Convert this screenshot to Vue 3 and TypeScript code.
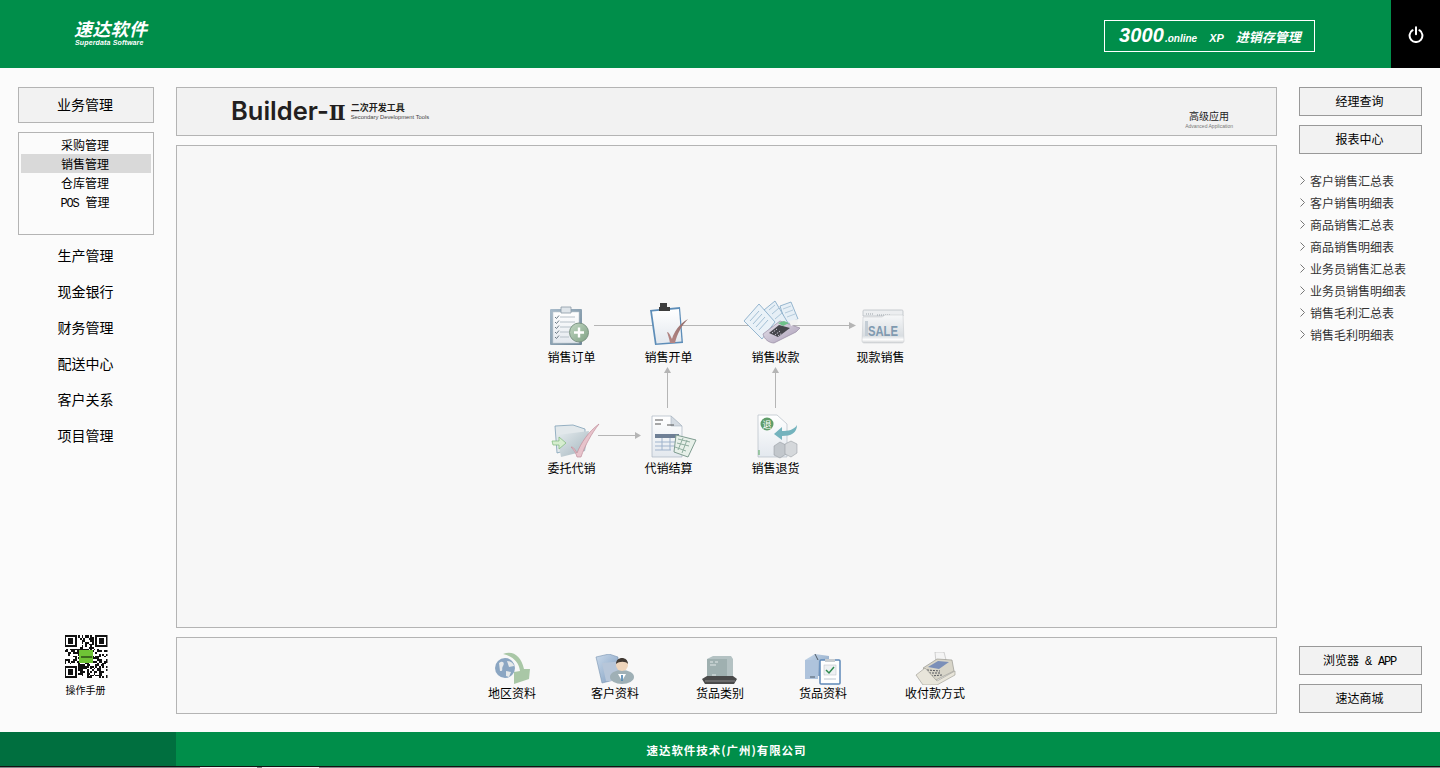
<template>
  <div class="page">
    <svg class="defs" width="0" height="0">
      <defs>
        <linearGradient id="gBoard" x1="0" y1="0" x2="1" y2="1"><stop offset="0" stop-color="#a9bccb" /><stop offset="1" stop-color="#6f8798" /></linearGradient>
        <linearGradient id="gPaper" x1="0" y1="0" x2="0" y2="1"><stop offset="0" stop-color="#ffffff" /><stop offset="1" stop-color="#e3e8ee" /></linearGradient>
        <linearGradient id="gFolder" x1="0" y1="0" x2="1" y2="1"><stop offset="0" stop-color="#e6ecef" /><stop offset="1" stop-color="#a3b5bd" /></linearGradient>
        <linearGradient id="gBlue" x1="0" y1="0" x2="1" y2="1"><stop offset="0" stop-color="#c9d9ea" /><stop offset="1" stop-color="#7f9dc0" /></linearGradient>
        <linearGradient id="gCheck" x1="0" y1="1" x2="1" y2="0"><stop offset="0" stop-color="#b98a88" /><stop offset="1" stop-color="#8f6a68" /></linearGradient>
        <linearGradient id="gGreen" x1="0" y1="0" x2="1" y2="1"><stop offset="0" stop-color="#c3d8c4" /><stop offset="1" stop-color="#7fa184" /></linearGradient>
        <linearGradient id="gSale" x1="0" y1="0" x2="0" y2="1"><stop offset="0" stop-color="#f7f8f9" /><stop offset=".75" stop-color="#d8dde1" /><stop offset=".88" stop-color="#fdfdfd" /><stop offset="1" stop-color="#cfd2d4" /></linearGradient>
        <linearGradient id="gPos" x1="0" y1="0" x2="1" y2="1"><stop offset="0" stop-color="#e9e6ee" /><stop offset="1" stop-color="#a89bb5" /></linearGradient>
      </defs>
    </svg>

    <header class="top">
      <div class="logo">
        <div class="logo-cn">速达软件</div>
        <div class="logo-en">Superdata Software</div>
      </div>
      <div class="product">
        <span class="p-num">3000</span><span class="p-online">.online</span>
        <span class="p-xp">XP</span>
        <span class="p-name">进销存管理</span>
      </div>
      <div class="power">
        <svg width="16" height="17" viewBox="0 0 16 17" fill="none" stroke="#fff" stroke-width="2" stroke-linecap="round">
          <path d="M4.6 4.2a6.4 6.4 0 1 0 6.8 0" />
          <path d="M8 1.2v7" />
        </svg>
      </div>
    </header>

    <div class="body">
      <aside class="left">
        <button class="tab-btn">业务管理</button>
        <ul class="sub-menu">
          <li v-for="item in subMenu" :key="item.label" :class="{ active: item.active }">
            <span v-if="item.latin" class="latin pos">{{ item.latin }}</span>{{ item.label }}
          </li>
        </ul>
        <ul class="main-menu">
          <li v-for="m in mainMenu" :key="m">{{ m }}</li>
        </ul>
        <div class="manual">
          <svg width="43" height="43" viewBox="0 0 25 25" shape-rendering="crispEdges">
            <rect width="25" height="25" fill="#fff" />
            <rect v-for="(c, i) in qrCells" :key="i" :x="c[0]" :y="c[1]" width="1" height="1" fill="#111" />
            <g v-for="f in qrFinders" :key="f[0] + '-' + f[1]">
              <rect :x="f[0]" :y="f[1]" width="7" height="7" fill="#111" />
              <rect :x="f[0] + 1" :y="f[1] + 1" width="5" height="5" fill="#fff" />
              <rect :x="f[0] + 2" :y="f[1] + 2" width="3" height="3" fill="#111" />
            </g>
            <rect x="8.700" y="8.700" width="8" height="7.600" fill="#6fc436" />
            <rect x="9.500" y="12" width="6.400" height="1.200" fill="#3c6a1e" />
          </svg>
          <span>操作手册</span>
        </div>
      </aside>

      <main class="center">
        <section class="banner">
          <div class="brand">
            <span class="brand-name">Builder-<span class="brand-two">Ⅱ</span></span>
            <div class="brand-sub">
              <span class="brand-cn">二次开发工具</span>
              <span class="brand-en">Secondary Development Tools</span>
            </div>
          </div>
          <div class="advanced">
            <span class="adv-cn">高级应用</span>
            <span class="adv-en">Advanced Application</span>
          </div>
        </section>

        <section class="canvas">
          <svg class="flow" width="1099" height="481" fill="none" stroke="#b5b5b5">
            <path d="M417 179.500H672" />
            <path d="M672 176l7 3.500-7 3.500z" fill="#b5b5b5" stroke="none" />
            <path d="M421 289.500H458" />
            <path d="M458 286l6 3.500-6 3.500z" fill="#b5b5b5" stroke="none" />
            <path d="M490.500 262V226" />
            <path d="M487 227l3.500-6 3.500 6z" fill="#b5b5b5" stroke="none" />
            <path d="M598.500 262V226" />
            <path d="M595 227l3.500-6 3.500 6z" fill="#b5b5b5" stroke="none" />
          </svg>

          <div
            v-for="n in flowNodes"
            :key="n.label"
            class="node"
            :style="{ left: n.x + 'px', top: n.y + 'px' }"
          >
            <svg class="node-icon" :width="n.w" :height="n.h" :viewBox="`0 0 ${n.w} ${n.h}`" :style="{ marginLeft: n.dx + 'px' }">
              <!-- 销售订单 -->
              <g v-if="n.icon === 'order'">
                <rect x="1" y="3" width="32" height="36" rx="1" fill="url(#gBoard)" />
                <rect x="4" y="6" width="26" height="31" fill="url(#gPaper)" stroke="#c3ccd3" stroke-width=".6" />
                <path d="M12 1h10v6H12z" fill="#dfe5ea" stroke="#8c9aa6" stroke-width=".8" />
                <path d="M11 11h15M11 16h15M11 21h12M11 26h9M11 31h9" stroke="#b6c0c8" />
                <path d="M6 11l1.500 1.500L10 9.500M6 16l1.500 1.500L10 14.500M6 21l1.500 1.500L10 19.500M6 26l1.500 1.500L10 24.500M6 31l1.500 1.500L10 29.500" stroke="#6b7a85" fill="none" />
                <circle cx="30" cy="26.500" r="9.500" fill="url(#gGreen)" stroke="#7d9585" />
                <path d="M30 21.500v10M25 26.500h10" stroke="#fff" stroke-width="2.400" />
              </g>
              <!-- 销售开单 -->
              <g v-else-if="n.icon === 'bill'">
                <path d="M2 9L32 6l3 36-28 2z" fill="#5d8db8" />
                <path d="M4 10.500L31 8l2.500 32.500-25 2z" fill="url(#gPaper)" />
                <path d="M12 2h7v4h3v4H11V6h1z" fill="#3d3d3d" />
                <path d="M19 31c2 0 3 3 5 7 2-7 7-15 16-20-6 6-11 15-13 24h-5c-1-5-2-8-3-11z" fill="url(#gCheck)" />
              </g>
              <!-- 销售收款 -->
              <g v-else-if="n.icon === 'pay'">
                <path d="M36 5L47 1l7 17-12 6z" fill="#e6eff6" stroke="#7fa6c4" stroke-width=".8" />
                <path d="M39 8l8-3M41 12l8-3M43 16l8-3" stroke="#b5cbdc" />
                <path d="M20 9L31 0l13 22-13 10z" fill="#e6eff6" stroke="#7fa6c4" stroke-width=".8" />
                <path d="M25 9l6-5M28 13l7-6M31 18l7-6" stroke="#a9c4d8" />
                <path d="M0 20L15 3l16 18-13 17z" fill="#eaf2f8" stroke="#7fa6c4" stroke-width=".8" />
                <path d="M6 20l9-10M9 23l9-10M12 26l9-10M15 29l9-10" stroke="#a3bfd4" />
                <path d="M19 33L36 20l20 7-4 4-22 11c-5 0-10-4-11-9z" fill="url(#gPos)" stroke="#8b7e99" stroke-width=".6" />
                <path d="M25 32l10-8 11 3-12 9z" fill="#45454b" />
                <path d="M34 22l6-2 5 2-6 3z" fill="#6fc08a" />
                <path d="M28 32l5-4M31 34l5-4M34 35l4-3" stroke="#c8c4d0" stroke-dasharray="1.500 1" />
                <path d="M45 20l9-2-1 5-6 2z" fill="#f2f2f2" />
              </g>
              <!-- 现款销售 -->
              <g v-else-if="n.icon === 'sale'">
                <path d="M2 2C2 1 3 1 4 1h36c1 0 2 0 2 1v5H2z" fill="#eceef0" stroke="#a9afb5" stroke-width=".6" />
                <path d="M5 5h8M16 6h14" stroke="#9aa2a9" stroke-dasharray="1 1" />
                <path d="M2 8h19l3-2h18l1 26c0 1-1 2-2 2H3c-1 0-2-1-2-2z" fill="url(#gSale)" stroke="#c0c5c9" stroke-width=".5" />
                <rect x="4" y="12" width="3" height="15" fill="#c5ced6" />
                <text x="7" y="26.500" class="sale-text" textLength="30" lengthAdjust="spacingAndGlyphs">SALE</text>
              </g>
              <!-- 委托代销 -->
              <g v-else-if="n.icon === 'consign'">
                <path d="M4 3L22 2l12 4 0 16-28 8z" fill="#e2e8eb" stroke="#7fa0b6" stroke-width=".8" />
                <path d="M6 12L38 8l-4 20-24 6z" fill="url(#gFolder)" />
                <path d="M1 18h7v-4l7 6-7 6v-4H2z" fill="#d6edcf" stroke="#7cb979" stroke-width=".7" />
                <path d="M20 24c3 0 4 3 6 6C30 20 37 9 48 1 41 10 34 22 30 34h-4c-1-4-3-7-6-10z" fill="#e7c3cb" stroke="#c18e9b" stroke-width=".7" />
              </g>
              <!-- 代销结算 -->
              <g v-else-if="n.icon === 'settle'">
                <path d="M1 1h19l11 10v31H1z" fill="url(#gPaper)" stroke="#aab6c2" stroke-width=".7" />
                <path d="M20 1v10h11z" fill="#d4dbe2" stroke="#aab6c2" stroke-width=".6" />
                <path d="M4 5h8M4 9h6M16 10h7" stroke="#555" />
                <rect x="4" y="19" width="24" height="4" fill="#6e7f95" />
                <path d="M4 27h24M4 31h24M4 35h16M11 23v12M19 23v12" stroke="#9fb3cc" />
                <path d="M25 20l20 5-8 17-14-5z" fill="#e7f0e9" stroke="#7f9c90" />
                <path d="M27 24l12 3M26 28l12 3M24 32l11 4M32 23l-5 12M36 25l-5 13" stroke="#8fae9f" />
              </g>
              <!-- 销售退货 -->
              <g v-else-if="n.icon === 'back'">
                <path d="M1 1h19l10 9v33H1z" fill="url(#gPaper)" stroke="#b4bdc6" stroke-width=".7" />
                <circle cx="10" cy="10" r="6.500" fill="#5f9d69" />
                <text x="10" y="13.500" class="back-text">退</text>
                <path d="M40 11c0 8-6 11-15 11v4l-8-6 8-7v4c6 0 12-1 15-6z" fill="#74b3bd" />
                <path d="M17 32l6-4 6 3v9l-6 4-6-3z" fill="#c2c7cc" stroke="#8d9398" stroke-width=".5" />
                <path d="M28 30l6-3 6 3v9l-6 4-6-3z" fill="#d5d8db" stroke="#8d9398" stroke-width=".5" />
                <path d="M2 36v5" stroke="#56a85e" />
              </g>
            </svg>
            <span class="node-label">{{ n.label }}</span>
          </div>
        </section>

        <section class="shortcuts">
          <div v-for="s in shortcuts" :key="s.label" class="shortcut">
            <svg :width="s.w" :height="s.h" :viewBox="`0 0 ${s.w} ${s.h}`">
              <!-- 地区资料 -->
              <g v-if="s.icon === 'globe'">
                <path d="M9 3c10-4 18 2 21 15l6 0-1 10-15 5 0-12 6-1C25 11 18 5 9 3z" fill="#a9c7a6" />
                <circle cx="11" cy="17" r="10" fill="#8ba6c2" />
                <path d="M5 12c4-3 6 0 4 3s1 5-3 5zM13 10c4 0 7 3 7 5l-5 1zM12 20l5 1-2 5-3-1z" fill="#e6e9ea" />
              </g>
              <!-- 客户资料 -->
              <g v-else-if="s.icon === 'client'">
                <path d="M1 3l13-3 9 3v22l-16 4z" fill="url(#gBlue)" stroke="#7993b0" stroke-width=".6" />
                <path d="M7 9l24-2-4 20H11z" fill="#b7c6d9" />
                <ellipse cx="27" cy="23" rx="12" ry="7" fill="#9fb0b6" />
                <path d="M23 20h8l-4 7z" fill="#fff" />
                <path d="M27 21v6" stroke="#3c78a8" stroke-width="1.500" />
                <circle cx="27" cy="11" r="6" fill="#efd5bb" />
                <path d="M21 10c0-8 12-8 12 0-2-3-9-3-12 0z" fill="#423a33" />
              </g>
              <!-- 货品类别 -->
              <g v-else-if="s.icon === 'pallet'">
                <path d="M5 5l6-3h18l2 3v20H5z" fill="#b4c2c3" />
                <path d="M5 5h20v20H5z" fill="#9fb0b0" />
                <path d="M8 8h3M13 8h3M8 11h6M10 21h4" stroke="#e2e8e8" />
                <path d="M0 25l5-3h26l4 3-3 5H3z" fill="#4a4a4a" />
                <path d="M3 27h30" stroke="#8a8a8a" />
              </g>
              <!-- 货品资料 -->
              <g v-else-if="s.icon === 'goods'">
                <path d="M1 7l10-6 14 2v20H1z" fill="url(#gBlue)" />
                <path d="M1 7h13v19H1z" fill="#aec3dc" />
                <path d="M11 1l3 6M6 24h5" stroke="#4f5b66" />
                <rect x="16" y="7" width="20" height="24" rx="1" fill="#fff" stroke="#5d88b8" stroke-width="1.500" />
                <path d="M21 6h10v3H21z" fill="#c7ccd0" />
                <rect x="20" y="12" width="12" height="10" fill="#eef1f3" stroke="#b6bdc4" stroke-width=".5" />
                <path d="M22 17l3 3 5-6" stroke="#2f8a50" stroke-width="1.500" fill="none" />
                <path d="M20 26h12" stroke="#bcc6d0" />
              </g>
              <!-- 收付款方式 -->
              <g v-else-if="s.icon === 'cash'">
                <path d="M20 0h9l2 8-10 3z" fill="#f4f4f4" stroke="#a8a8a8" stroke-width=".5" />
                <path d="M8 16l14-9 15 1 2 11-18 9z" fill="#d8d5c9" stroke="#8c8c84" stroke-width=".6" />
                <path d="M13 15l10-6 11 1-10 7z" fill="#7b8fb8" />
                <path d="M12 18l13 1M14 21l12 0M16 24l11-1" stroke="#55575c" stroke-dasharray="2 1" />
                <path d="M1 23l9-7 12 13 18-10v4L22 33H8z" fill="#e8e5da" stroke="#98978e" stroke-width=".6" />
              </g>
            </svg>
            <span>{{ s.label }}</span>
          </div>
        </section>
      </main>

      <aside class="right">
        <button class="side-btn">经理查询</button>
        <button class="side-btn">报表中心</button>
        <ul class="reports">
          <li v-for="r in reports" :key="r">
            <svg width="5" height="9" viewBox="0 0 5 9" fill="none" stroke="#777"><path d="M.5.5l4 4-4 4" /></svg>
            <span>{{ r }}</span>
          </li>
        </ul>
        <div class="right-bottom">
          <button class="side-btn">浏览器<span class="latin app">&amp; APP</span></button>
          <button class="side-btn">速达商城</button>
        </div>
      </aside>
    </div>

    <footer class="foot">
      <div class="foot-left"></div>
      <div class="foot-text">速达软件技术(广州)有限公司</div>
    </footer>
    <div class="foot-line">
      <i class="seg seg-a"></i>
      <i class="seg seg-b"></i>
    </div>
  </div>
</template>

<script setup lang="ts">
type Item = { label: string; latin?: string; active?: boolean }
type Node = { label: string; icon: string; x: number; y: number; w: number; h: number; dx: number }
type Shortcut = { label: string; icon: string; w: number; h: number }

const subMenu: Item[] = [
  { label: '采购管理' },
  { label: '销售管理', active: true },
  { label: '仓库管理' },
  { label: '管理', latin: 'POS' },
]

const mainMenu = ['生产管理', '现金银行', '财务管理', '配送中心', '客户关系', '项目管理']

// x, y are relative to the canvas panel; x is the label column's left edge
const flowNodes: Node[] = [
  { label: '销售订单', icon: 'order', x: 370, y: 160, w: 42, h: 40, dx: 2 },
  { label: '销售开单', icon: 'bill', x: 467, y: 155, w: 44, h: 45, dx: 4 },
  { label: '销售收款', icon: 'pay', x: 574, y: 155, w: 56, h: 45, dx: -7 },
  { label: '现款销售', icon: 'sale', x: 679, y: 163, w: 45, h: 37, dx: 5 },
  { label: '委托代销', icon: 'consign', x: 370, y: 277, w: 50, h: 34, dx: 4 },
  { label: '代销结算', icon: 'settle', x: 467, y: 269, w: 46, h: 42, dx: 7 },
  { label: '销售退货', icon: 'back', x: 574, y: 268, w: 41, h: 43, dx: 6 },
]

const shortcuts: Shortcut[] = [
  { label: '地区资料', icon: 'globe', w: 37, h: 34 },
  { label: '客户资料', icon: 'client', w: 40, h: 31 },
  { label: '货品类别', icon: 'pallet', w: 36, h: 31 },
  { label: '货品资料', icon: 'goods', w: 38, h: 32 },
  { label: '收付款方式', icon: 'cash', w: 41, h: 33 },
]

const reports = [
  '客户销售汇总表',
  '客户销售明细表',
  '商品销售汇总表',
  '商品销售明细表',
  '业务员销售汇总表',
  '业务员销售明细表',
  '销售毛利汇总表',
  '销售毛利明细表',
]

const qrFinders = [
  [0, 0],
  [18, 0],
  [0, 18],
]

// not a scannable code, only the look of one
const qrCells: number[][] = []
let seed = 11
for (let y = 0; y < 25; y++) {
  for (let x = 0; x < 25; x++) {
    seed = (seed * 1103515245 + 12345) & 0x7fffffff
    const inFinder = (x < 8 && y < 8) || (x > 16 && y < 8) || (x < 8 && y > 16)
    if (!inFinder && (seed >> 16) % 2 === 0) qrCells.push([x, y])
  }
}
</script>

<style scoped>
.page {
  position: relative;
  display: flex;
  flex-direction: column;
  height: 768px;
  background: #fbfbfb;
  color: #000;
  font-family: "Noto Sans CJK SC", "Liberation Sans", sans-serif;
  font-size: 12px;
  overflow: hidden;
}
.defs {
  position: absolute;
}
ul {
  list-style: none;
  margin: 0;
  padding: 0;
}
button {
  font: inherit;
  color: inherit;
  padding: 0 2px 2px 0;
  display: block;
  cursor: pointer;
}
svg {
  display: block;
}
.latin {
  font-family: "Liberation Mono", monospace;
  font-size: 12px;
  letter-spacing: -1.200px;
  white-space: pre;
  word-spacing: 1px;
}
.pos {
  margin-right: 7px;
}
.app {
  margin-left: 6px;
}

.top {
  display: flex;
  align-items: center;
  height: 68px;
  background: #008e4a;
  color: #fff;
  flex: none;
}
.logo {
  margin-left: 74px;
  width: 90px;
  font-style: italic;
  font-weight: 700;
}
.logo-cn {
  font-family: "Liberation Sans", "Noto Sans CJK SC", sans-serif;
  font-size: 18px;
  line-height: 18px;
  letter-spacing: 0.300px;
}
.logo-en {
  font-family: "Liberation Sans", sans-serif;
  font-size: 7px;
  line-height: 8px;
  letter-spacing: 0.150px;
  margin-left: 1px;
}
.product {
  display: flex;
  align-items: baseline;
  margin-left: auto;
  margin-top: 4px;
  width: 211px;
  height: 32px;
  box-sizing: border-box;
  border: 1px solid #fff;
  padding-left: 14px;
  line-height: 29px;
  font-style: italic;
  font-weight: 700;
  font-family: "Liberation Sans", sans-serif;
}
.p-num {
  font-size: 20px;
  letter-spacing: 0.100px;
}
.p-online {
  font-size: 10px;
  margin-left: 1px;
}
.p-xp {
  font-size: 11px;
  margin-left: 12px;
}
.p-name {
  font-family: "Noto Sans CJK SC", sans-serif;
  font-size: 13px;
  margin-left: 12px;
}
.power {
  display: flex;
  align-items: center;
  justify-content: center;
  width: 49px;
  height: 68px;
  margin-left: 76px;
  background: #000;
}

.body {
  flex: 1;
  display: flex;
  padding: 19px 18px 18px;
  gap: 22px;
  min-height: 0;
}

.left {
  width: 136px;
  display: flex;
  flex-direction: column;
}
.tab-btn {
  height: 36px;
  flex: none;
  background: #f2f2f2;
  border: 1px solid #b4b4b4;
  font-size: 14px;
}
.sub-menu {
  margin-top: 9px;
  height: 103px;
  box-sizing: border-box;
  border: 1px solid #b4b4b4;
  padding: 2px 2px;
  flex: none;
}
.sub-menu li {
  height: 19px;
  line-height: 19px;
  padding-right: 2px;
  text-align: center;
}
.sub-menu li.active {
  background: #d9d9d9;
}
.main-menu {
  margin-top: 2px;
}
.main-menu li {
  height: 36px;
  line-height: 36px;
  padding-right: 1px;
  text-align: center;
  font-size: 14px;
}
.manual {
  margin-top: auto;
  margin-bottom: 17px;
  display: flex;
  flex-direction: column;
  align-items: center;
  gap: 5px;
  font-size: 10px;
  line-height: 14px;
  transform: translateX(-0.500px);
}

.center {
  width: 1101px;
  display: flex;
  flex-direction: column;
  gap: 9px;
}
.banner {
  height: 49px;
  flex: none;
  box-sizing: border-box;
  display: flex;
  align-items: center;
  background: #f2f2f2;
  border: 1px solid #b4b4b4;
}
.brand {
  display: flex;
  align-items: center;
  margin-left: 54px;
  color: #231f20;
}
.brand-name {
  font-family: Inter, "Liberation Sans", sans-serif;
  font-weight: 600;
  font-size: 25.500px;
  line-height: 30px;
}
.brand-two {
  font-family: "DejaVu Serif", serif;
  font-weight: 700;
  font-size: 20px;
}
.brand-sub {
  display: flex;
  flex-direction: column;
  margin-left: 5px;
}
.brand-cn {
  font-size: 9px;
  line-height: 11px;
  font-weight: 700;
}
.brand-en {
  font-family: "Liberation Sans", sans-serif;
  font-size: 5.800px;
  line-height: 8px;
  color: #444;
}
.advanced {
  margin-left: auto;
  margin-right: 43px;
  margin-top: 15px;
  display: flex;
  flex-direction: column;
  align-items: center;
}
.adv-cn {
  font-size: 10px;
  line-height: 14px;
  color: #222;
}
.adv-en {
  font-family: "Liberation Sans", sans-serif;
  font-size: 5px;
  line-height: 7px;
  color: #777;
}

.canvas {
  position: relative;
  flex: 1;
  min-height: 0;
  background: #f7f7f7;
  border: 1px solid #b4b4b4;
}
.flow {
  position: absolute;
  left: 0;
  top: 0;
}
.node {
  position: absolute;
  width: 70px;
  height: 60px;
}
.node-icon {
  overflow: visible;
}
.node-label {
  display: block;
  width: 49px;
  text-align: center;
  line-height: 16px;
  margin-top: 3px;
  white-space: nowrap;
}
.sale-text {
  font-family: "Liberation Sans", sans-serif;
  font-weight: 700;
  font-size: 15px;
  fill: #7f9ab0;
}
.back-text {
  font-size: 9px;
  fill: #fff;
  text-anchor: middle;
}

.shortcuts {
  height: 77px;
  flex: none;
  box-sizing: border-box;
  background: #f8f8f8;
  border: 1px solid #b4b4b4;
  padding: 13px 0 0 283px;
  display: grid;
  grid-template-columns: 104px 102px 108px 98px 126px;
}
.shortcut {
  display: flex;
  flex-direction: column;
  align-items: center;
  height: 50px;
  justify-content: flex-end;
  line-height: 16px;
}

.right {
  width: 123px;
  display: flex;
  flex-direction: column;
}
.side-btn {
  width: 100%;
  height: 29px;
  flex: none;
  background: #f2f2f2;
  border: 1px solid #999;
  font-size: 12px;
}
.side-btn + .side-btn {
  margin-top: 9px;
}
.reports {
  margin-top: 15px;
}
.reports li {
  display: flex;
  align-items: center;
  height: 22px;
  padding-left: 1px;
  gap: 5px;
  color: #333;
  white-space: nowrap;
}
.right-bottom {
  margin-top: auto;
  margin-bottom: 1px;
}

.foot {
  flex: none;
  display: flex;
  height: 34px;
  background: #008e4a;
}
.foot-left {
  width: 176px;
  background: #006f3f;
}
.foot-text {
  width: 1101px;
  text-align: center;
  line-height: 36px;
  color: #fff;
  font-size: 11.500px;
  font-weight: 700;
  letter-spacing: 0.950px;
}
.foot-line {
  flex: none;
  display: flex;
  height: 1px;
  border-top: 1px solid #111;
  background: #7f8586;
}
.seg {
  display: block;
  width: 57px;
  background: #f0f0f0;
}
.seg-a {
  margin-left: 200px;
}
.seg-b {
  margin-left: 5px;
}
</style>
